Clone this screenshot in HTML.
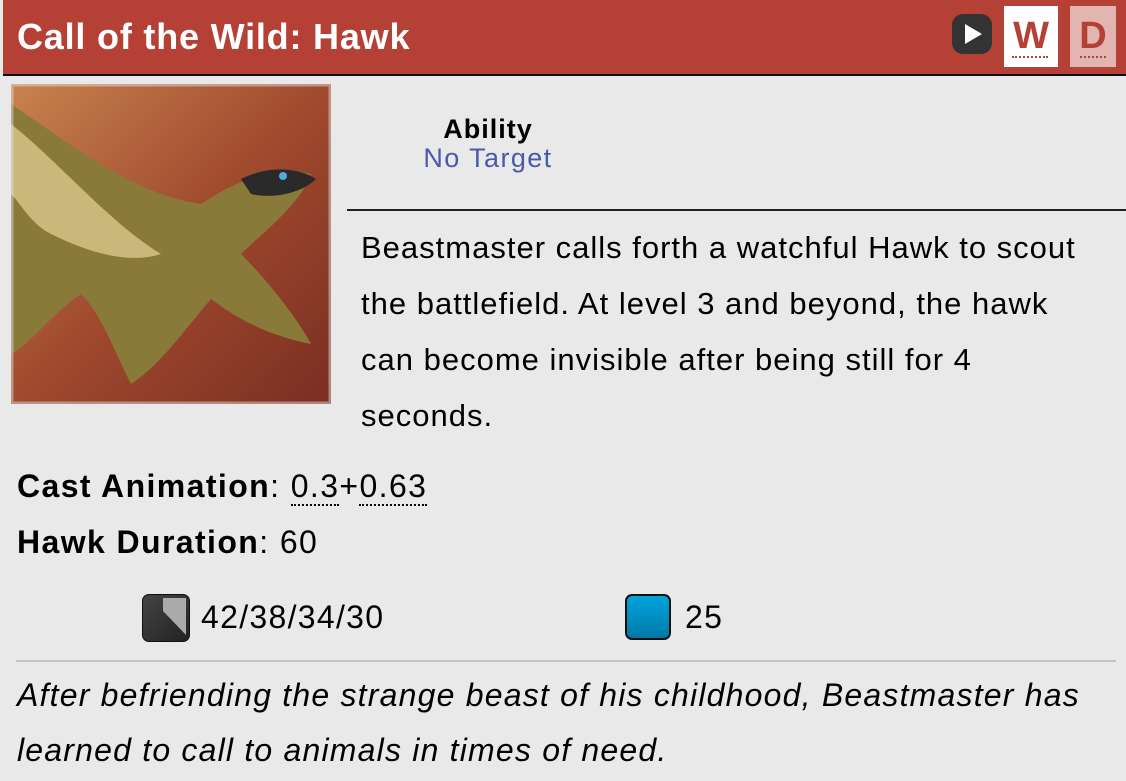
<!DOCTYPE html>
<html><head><style>
body{margin:0;width:1126px;height:781px;background:#e9e9e9;font-family:"Liberation Sans",Arial,sans-serif;position:relative;overflow:hidden;color:#000}
.hdr{position:absolute;left:3px;top:0;width:1123px;height:74px;background:#b54036;border-bottom:2px solid #111}
.title{position:absolute;left:14px;top:16px;color:#fff;font-weight:bold;font-size:36px;letter-spacing:0.8px}
.abs{position:absolute;white-space:nowrap}
.desc{position:absolute;left:361px;top:220px;width:765px;font-size:31px;line-height:56px;letter-spacing:1px;white-space:nowrap}
.u{border-bottom:2px dotted #000}
</style></head><body>
<div class="hdr">
<div class="title">Call of the Wild: Hawk</div>
<div class="abs" style="left:949px;top:14px;width:40px;height:40px;background:#333;border-radius:11px"><svg width="40" height="40"><polygon points="13,10 30,20 13,30" fill="#fff"/></svg></div>
<div class="abs" style="left:1001px;top:6px;width:54px;height:61px;background:#fff;color:#b54036;font-weight:bold;font-size:38px;text-align:center;line-height:60px">W<div style="position:absolute;left:8px;right:10px;top:50px;border-top:2px dotted #b54036"></div></div>
<div class="abs" style="left:1067px;top:6px;width:46px;height:61px;background:#e2b5b0;color:#b54036;font-weight:bold;font-size:38px;text-align:center;line-height:60px">D<div style="position:absolute;left:10px;right:10px;top:50px;border-top:2px dotted #b54036"></div></div>
</div>
<svg class="abs" style="left:11px;top:84px" width="320" height="320">
<defs><linearGradient id="s" x1="0" y1="0" x2="1" y2="1"><stop offset="0" stop-color="#c8834f"/><stop offset=".5" stop-color="#a04a2e"/><stop offset="1" stop-color="#7a2e22"/></linearGradient></defs>
<rect width="320" height="320" fill="url(#s)"/>
<path d="M0,20 C60,60 120,110 190,120 C220,100 260,80 300,90 C290,120 250,150 230,170 C260,200 290,240 300,260 C250,250 220,230 200,215 C170,250 150,280 120,300 C100,260 90,230 70,210 C40,230 20,260 0,270 Z" fill="#8a7a3a"/>
<path d="M0,40 C50,80 100,140 150,170 C120,180 80,170 40,150 C20,140 10,120 0,110 Z" fill="#c9b87a"/>
<path d="M230,95 C260,80 290,85 305,95 C290,110 260,115 240,110 Z" fill="#2a2a2a"/>
<circle cx="272" cy="92" r="4" fill="#5ad"/>
<rect x="1" y="1" width="318" height="318" fill="none" stroke="#ddd" stroke-opacity=".5" stroke-width="3"/>
</svg>
<div class="abs" style="left:408px;top:114px;width:160px;text-align:center;font-size:27px;font-weight:bold;letter-spacing:1px">Ability</div>
<div class="abs" style="left:398px;top:143px;width:180px;text-align:center;font-size:27px;color:#4a58ad;letter-spacing:1.4px">No Target</div>
<div class="abs" style="left:347px;top:209px;width:779px;border-top:2px solid #222"></div>
<div class="desc">Beastmaster calls forth a watchful Hawk to scout<br>the battlefield. At level 3 and beyond, the hawk<br>can become invisible after being still for 4<br>seconds.</div>
<div class="abs" style="left:17px;top:468px;font-size:32px;letter-spacing:1.4px"><b>Cast Animation</b>: <span class="u">0.3</span>+<span class="u">0.63</span></div>
<div class="abs" style="left:17px;top:524px;font-size:32px;letter-spacing:1.4px"><b>Hawk Duration</b>: 60</div>
<div class="abs" style="left:142px;top:594px;width:46px;height:46px;border-radius:7px;background:linear-gradient(135deg,#444,#222);overflow:hidden;border:1px solid #111"><svg width="46" height="46"><polygon points="20,3 43,3 43,40 20,16" fill="#aaa"/></svg></div>
<div class="abs" style="left:201px;top:599px;font-size:32px;letter-spacing:1.3px">42/38/34/30</div>
<div class="abs" style="left:625px;top:594px;width:46px;height:46px;border-radius:7px;background:linear-gradient(#00a4dd,#0079a8);border:2px solid #111;box-sizing:border-box"></div>
<div class="abs" style="left:685px;top:599px;font-size:32px;letter-spacing:1.3px">25</div>
<div class="abs" style="left:16px;top:660px;width:1100px;border-top:2px solid #c4c4c4"></div>
<div class="abs" style="left:17px;top:668px;font-size:32px;font-style:italic;line-height:55px;white-space:normal;width:1100px;letter-spacing:1.2px">After befriending the strange beast of his childhood, Beastmaster has learned to call to animals in times of need.</div>
</body></html>
